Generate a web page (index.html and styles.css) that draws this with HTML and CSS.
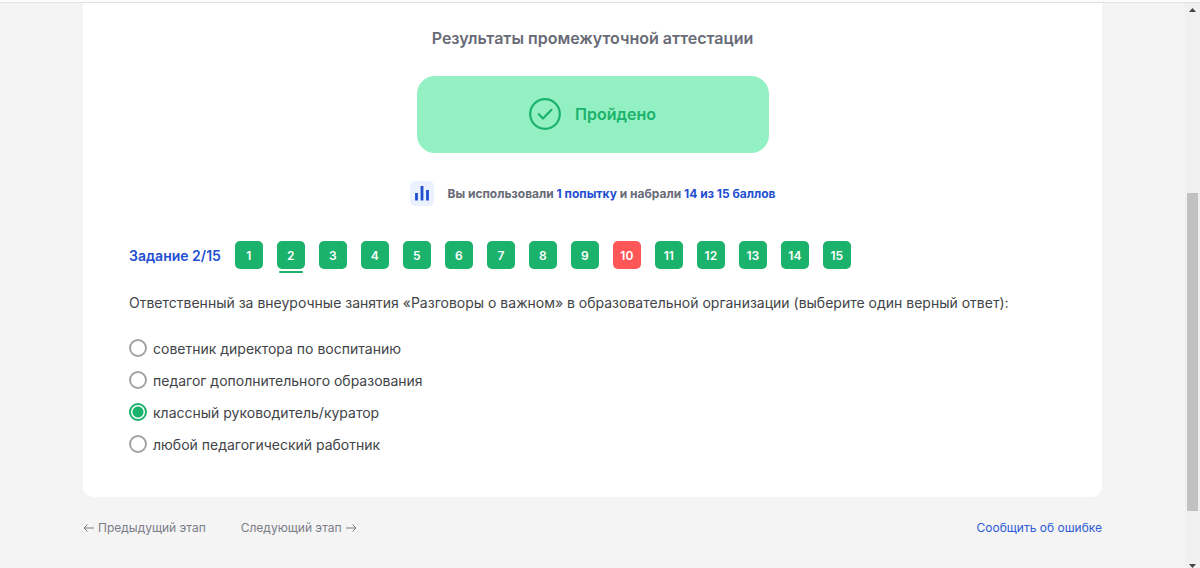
FILE: index.html
```html
<!DOCTYPE html>
<html lang="ru">
<head>
    <meta charset="UTF-8">
    <meta name="viewport" content="width=device-width, initial-scale=1.0">
    <title>Результаты промежуточной аттестации</title>
    <link rel="stylesheet" href="styles.css">
</head>
<body>
    <div class="window">
        <div class="page">
            <main class="card">
                <h1 class="title">Результаты промежуточной аттестации</h1>

                <div class="result">
                    <svg class="result-icon" viewBox="0 0 32 32" fill="none" stroke="currentColor" stroke-width="2.200">
                        <circle cx="16" cy="16" r="14.800"/>
                        <path d="M9.800 16.200l4.200 4.300L22.500 11.800" stroke-linecap="round" stroke-linejoin="round"/>
                    </svg>
                    <span>Пройдено</span>
                </div>

                <div class="score">
                    <svg class="score-icon" viewBox="0 0 24 25">
                        <rect width="24" height="25" rx="5" fill="#ebf1ff"/>
                        <path d="M6.500 12v7.500M12 5v14.500M17.500 9v10.500" fill="none" stroke="#1f4fd1" stroke-width="2.800"/>
                    </svg>
                    <p>Вы использовали <b>1 попытку</b> и набрали <b>14 из 15 баллов</b></p>
                </div>

                <div class="tasks">
                    <span class="tasks-label">Задание 2/15</span>
                    <button type="button" class="task">1</button>
                    <button type="button" class="task active">2</button>
                    <button type="button" class="task">3</button>
                    <button type="button" class="task">4</button>
                    <button type="button" class="task">5</button>
                    <button type="button" class="task">6</button>
                    <button type="button" class="task">7</button>
                    <button type="button" class="task">8</button>
                    <button type="button" class="task">9</button>
                    <button type="button" class="task wrong">10</button>
                    <button type="button" class="task">11</button>
                    <button type="button" class="task">12</button>
                    <button type="button" class="task">13</button>
                    <button type="button" class="task">14</button>
                    <button type="button" class="task">15</button>
                </div>

                <fieldset class="question">
                    <legend>Ответственный за внеурочные занятия «Разговоры о важном» в образовательной организации (выберите один верный ответ):</legend>
                    <label class="answer"><input type="radio" name="answer">советник директора по воспитанию</label>
                    <label class="answer"><input type="radio" name="answer">педагог дополнительного образования</label>
                    <label class="answer"><input type="radio" name="answer" checked>классный руководитель/куратор</label>
                    <label class="answer"><input type="radio" name="answer">любой педагогический работник</label>
                </fieldset>
            </main>

            <nav class="steps">
                <a href="#">
                    <svg class="arrow" viewBox="0 0 11 10"><path d="M11 5H1M4.500 1.500L1 5l3.500 3.500"/></svg>
                    Предыдущий этап
                </a>
                <a href="#">
                    Следующий этап
                    <svg class="arrow" viewBox="0 0 11 10"><path d="M0 5h10M6.500 1.500L10 5L6.500 8.500"/></svg>
                </a>
                <a href="#" class="report">Сообщить об ошибке</a>
            </nav>
        </div>

        <div class="scrollbar">
            <svg viewBox="0 0 7 4"><path d="M0 4L3.500 0L7 4z"/></svg>
            <div class="track"><div class="thumb"></div></div>
            <svg viewBox="0 0 7 4"><path d="M0 0L3.500 4L7 0z"/></svg>
        </div>
    </div>
</body>
</html>
```
FILE: styles.css
```css
* {
    box-sizing: border-box;
}
body {
    margin: 0;
    padding-top: 2px;
    font-family: Inter, "Open Sans", sans-serif;
    font-size: 14px;
    color: #414448;
    background: #fcfcfc;
}
.window {
    display: flex;
    min-height: calc(100vh - 2px);
    border-top: 1px solid #e0e0e0;
    background: #f4f4f4;
}
.page {
    flex: 1;
    padding: 0 83px;
}
.card {
    background: #fff;
    border-radius: 0 0 10px 10px;
    padding: 23px 46px 34px;
}
.title {
    margin: 0;
    font-size: 16px;
    line-height: 24px;
    font-weight: 600;
    text-align: center;
    color: #686b76;
}
.result {
    display: flex;
    align-items: center;
    justify-content: center;
    gap: 14px;
    width: 100%;
    max-width: 352px;
    margin: 26px auto 28px;
    padding: 22px 0 23px;
    border-radius: 18px;
    background: #92f0c2;
    color: #1bb26b;
    font-size: 16px;
    font-weight: 600;
}
.result-icon {
    width: 32px;
    height: 32px;
}
.score {
    display: flex;
    align-items: center;
    justify-content: center;
    gap: 14px;
    color: #686b76;
    font-size: 12px;
    font-weight: 700;
}
.score p {
    margin: 0;
}
.score b {
    font-weight: 700;
    color: #1f4fd1;
}
.score-icon {
    width: 24px;
    height: 25px;
}
.tasks {
    display: flex;
    flex-wrap: wrap;
    align-items: center;
    gap: 14px;
    margin-top: 35px;
}
.tasks-label {
    font-weight: 600;
    color: #1f4fd1;
}
.task {
    position: relative;
    width: 28px;
    height: 28px;
    padding: 0;
    border: none;
    border-radius: 5px;
    background: #1bb26b;
    color: #fff;
    font-family: inherit;
    font-size: 12px;
    font-weight: 600;
    cursor: pointer;
}
.task.wrong {
    background: #ff5757;
}
.task.active::after {
    content: "";
    position: absolute;
    left: 2px;
    right: 2px;
    bottom: -4px;
    height: 2px;
    border-radius: 1px;
    background: #1bb26b;
}
.question {
    margin: 22px 0 0;
    padding: 0;
    border: none;
}
.question legend {
    padding: 0;
    margin-bottom: 21px;
    line-height: 24px;
}
.answer {
    display: flex;
    align-items: center;
    gap: 6px;
    height: 24px;
    margin-bottom: 8px;
    cursor: pointer;
}
.answer:last-child {
    margin-bottom: 7px;
}
.answer input {
    appearance: none;
    width: 18px;
    height: 18px;
    margin: 0;
    border: 2px solid #a3a3a3;
    border-radius: 50%;
}
.answer input:checked {
    border-color: #1bb26b;
    background: radial-gradient(circle, #1bb26b 5px, #fff 6px);
}
.steps {
    display: flex;
    gap: 35px;
    padding: 21px 0;
    font-size: 12px;
    line-height: 20px;
}
.steps a {
    display: flex;
    align-items: center;
    gap: 4px;
    color: #7b7d87;
    text-decoration: none;
}
.steps .report {
    margin-left: auto;
    color: #2f5bd5;
}
.arrow {
    width: 11px;
    height: 10px;
    fill: none;
    stroke: currentColor;
}
.scrollbar {
    display: flex;
    flex-direction: column;
    align-items: center;
    width: 15px;
    padding-top: 5px;
    background: #f0f0f0;
}
.scrollbar svg {
    width: 7px;
    height: 4px;
    fill: #444;
}
.track {
    flex: 1;
    width: 11px;
}
.thumb {
    height: 318px;
    margin-top: 181px;
    background: #c1c1c1;
}
```
